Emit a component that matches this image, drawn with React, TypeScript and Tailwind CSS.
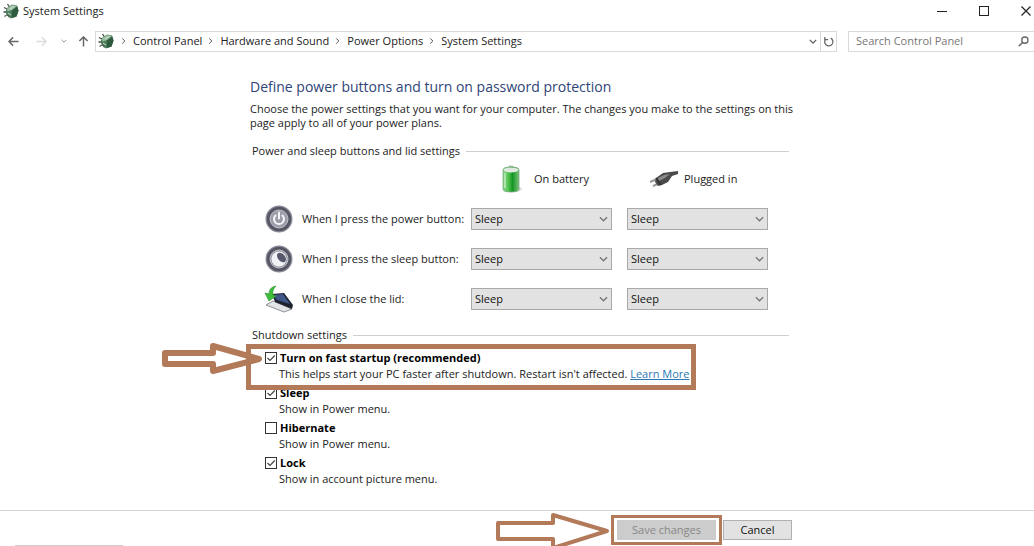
import React, { useState } from "react";

function GreenChip({ className }: { className: string }) {
  return (
    <svg viewBox="0 0 16 16" className={className} aria-hidden="true">
      <path d="M1 4.500 4 6M4.500 1 6.500 4M.5 9h3.500" stroke="#444c48" strokeWidth="1.300" fill="none" />
      <path d="M4 5 9 1.500l5 1 1.500 5-2 6-5.500 2-4-3-1.500-4Z" fill="#4b7c59" />
      <path d="M4 5.500 9 2l5 1-5 4-4.500 1.500Z" fill="#9dbfa4" />
      <path d="m9 7.500 5.500-4 1 4.500-2 5.500-4.500 1.500Z" fill="#2f5a3e" />
      <path d="m5 10 3 2M7 6l4-2.500" stroke="#cfe2d2" strokeWidth="1" fill="none" />
      <path d="m1.500 13.500 3-2 2 3" stroke="#56645b" strokeWidth="1.200" fill="none" />
    </svg>
  );
}

function Chevron({ className }: { className: string }) {
  return (
    <svg viewBox="0 0 10 6" className={className} fill="none" aria-hidden="true">
      <path d="m1 1 4 4 4-4" stroke="currentColor" strokeWidth="1.500" />
    </svg>
  );
}

function Arrow({ className, dir }: { className: string; dir: "left" | "right" | "up" }) {
  const d = {
    left: "M11.500 6H1M5.500 1.500 1 6l4.500 4.500",
    right: "M.5 6H11M6.500 1.500 11 6l-4.500 4.500",
    up: "M6 11.500V1M1.500 5.500 6 1l4.500 4.500",
  }[dir];
  return (
    <svg viewBox="0 0 12 12" className={className} fill="none" aria-hidden="true">
      <path d={d} stroke="currentColor" strokeWidth="1.600" />
    </svg>
  );
}

function Battery() {
  return (
    <svg viewBox="0 0 22 28" className="h-7 w-[22px]" aria-hidden="true">
      <defs>
        <linearGradient id="cell" x1="0" x2="1">
          <stop offset="0" stopColor="#8fd88c" />
          <stop offset=".35" stopColor="#4fc24d" />
          <stop offset=".6" stopColor="#149525" />
          <stop offset="1" stopColor="#7cc47c" />
        </linearGradient>
      </defs>
      <ellipse cx="14" cy="24" rx="7" ry="2.500" fill="#dcdcdc" />
      <rect x="7" y="0.500" width="6" height="4" rx="2" fill="#b8c4ba" />
      <path d="M2 5q0-3 8-3t8 3v19q0 3-8 3t-8-3Z" fill="url(#cell)" stroke="#6e9c72" strokeWidth=".7" />
      <ellipse cx="10" cy="5" rx="7.300" ry="2.400" fill="#dfe9e0" />
      <path d="M4 8v15" stroke="#d3f2d0" strokeWidth="1.200" />
    </svg>
  );
}

function Plug() {
  return (
    <svg viewBox="0 0 30 18" className="h-[18px] w-[30px]" aria-hidden="true">
      <path d="m1 12 7-3M4 16l7-3" stroke="#999" strokeWidth="2" />
      <path d="M7 8 14 3l7-1 8-1v3l-6 2-4 6-6 3-4 1-3-4Z" fill="#4a4a4a" />
      <path d="m9 8 6-3 6-1-5 4-6 3Z" fill="#8a8a8a" />
      <path d="m7 8 5 7" stroke="#333" strokeWidth="1.500" />
    </svg>
  );
}

function RoundButton({ kind }: { kind: "power" | "sleep" }) {
  return (
    <svg viewBox="0 0 28 28" className="size-7" aria-hidden="true">
      <circle cx="14" cy="14" r="13.500" fill="#8c8d98" />
      <circle cx="14" cy="14" r="12.200" fill="#555663" />
      <circle cx="14" cy="14" r="9" fill="#9b9da9" stroke="#bfc0c9" strokeWidth="1" />
      {kind === "power" ? (
        <>
          <path d="M10.500 10.500a5 5 0 1 0 7 0" fill="none" stroke="#f6f6fa" strokeWidth="2" strokeLinecap="round" />
          <path d="M14 7.500v6" stroke="#f6f6fa" strokeWidth="2" strokeLinecap="round" />
        </>
      ) : (
        <>
          <circle cx="14" cy="14" r="7.500" fill="#f1f2f6" />
          <ellipse cx="16.500" cy="12.500" rx="3.600" ry="5.500" transform="rotate(-40 16.500 12.500)" fill="#55586a" />
        </>
      )}
    </svg>
  );
}

function Lid() {
  return (
    <svg viewBox="0 0 30 28" className="h-7 w-[30px]" aria-hidden="true">
      <path d="m2 20 7-4 19 8-8 3Z" fill="#e3e4e6" stroke="#909298" strokeWidth="1" />
      <path d="M8 9 20 8l9 12-1 4-17-7Z" fill="#1d222d" />
      <path d="m9 10 10-1 7 10-13-4Z" fill="#3f5688" />
      <path d="M12 1C6 2 5 6 5 9L1 8l4 8 7-5-3-1c-.5-3 0-6 3-9Z" fill="#3fbd3c" stroke="#239026" strokeWidth=".6" />
    </svg>
  );
}

function Picker({ label }: { label: string }) {
  return (
    <div className="relative">
      <select
        aria-label={label}
        className="block h-[22px] w-full appearance-none border border-[#a9a9a9] bg-[#e2e2e2] pl-[3px] pr-5 text-[11px] leading-5 text-[#111]"
      >
        <option>Sleep</option>
        <option>Hibernate</option>
        <option>Do nothing</option>
      </select>
      <Chevron className="pointer-events-none absolute right-1 top-2 h-[6px] w-[9px] text-[#777]" />
    </div>
  );
}

function Section({ title }: { title: string }) {
  return (
    <div className="flex items-center gap-[6px] pl-[2px]">
      <h2 className="leading-4">{title}</h2>
      <div className="h-px flex-1 bg-[#cfcfcf]" />
    </div>
  );
}

function Option({ id, title, on, children }: { id: string; title: string; on: boolean; children: React.ReactNode }) {
  const [checked, setChecked] = useState(on);
  return (
    <div className="pl-[15px]">
      <div className="flex items-center gap-[3px]">
        <span className="relative size-3">
          <input
            id={id}
            type="checkbox"
            checked={checked}
            onChange={(e) => setChecked(e.target.checked)}
            className="peer block size-3 appearance-none border border-[#333] bg-white"
          />
          <svg
            viewBox="0 0 12 12"
            className="pointer-events-none absolute inset-0 hidden size-3 peer-checked:block"
            fill="none"
            aria-hidden="true"
          >
            <path d="m2.500 6 2.500 2.500L9.800 3.500" stroke="#444" strokeWidth="1.200" />
          </svg>
        </span>
        <label htmlFor={id} className="font-bold leading-4 text-black">
          {title}
        </label>
      </div>
      <p className="whitespace-nowrap pl-[14px] leading-4">{children}</p>
    </div>
  );
}

const crumbs = ["Control Panel", "Hardware and Sound", "Power Options", "System Settings"];

const rows = [
  { label: "When I press the power button:", icon: <RoundButton kind="power" /> },
  { label: "When I press the sleep button:", icon: <RoundButton kind="sleep" /> },
  { label: "When I close the lid:", icon: <Lid /> },
];

export default function App() {
  return (
    <div className="flex min-h-screen flex-col overflow-hidden bg-white font-['Open_Sans','Noto_Sans',sans-serif] text-[11px] text-[#222]">
      <header className="flex h-[22px] items-center gap-1 pl-[3px]">
        <GreenChip className="size-4" />
        <span>System Settings</span>
        <div className="ml-auto flex items-center gap-8 pr-[3px] text-[#222]">
          <button type="button" aria-label="Minimize" className="flex size-[10px] items-center">
            <span className="h-px w-full bg-[#222]" />
          </button>
          <button type="button" aria-label="Maximize" className="size-[10px] border border-[#222]" />
          <button type="button" aria-label="Close" className="size-[10px]">
            <svg viewBox="0 0 10 10" className="size-[10px]" fill="none">
              <path d="m.5.5 9 9m0-9-9 9" stroke="#222" strokeWidth="1.200" />
            </svg>
          </button>
        </div>
      </header>

      <div className="mt-[9px] flex h-5 items-center">
        <nav aria-label="History" className="flex w-[95px] items-center pl-2">
          <button type="button" aria-label="Back">
            <Arrow dir="left" className="size-[11px] text-[#666]" />
          </button>
          <button type="button" aria-label="Forward" className="ml-[17px]">
            <Arrow dir="right" className="size-[11px] text-[#ddd]" />
          </button>
          <button type="button" aria-label="Recent locations" className="ml-[14px]">
            <Chevron className="h-1 w-[6px] text-[#888]" />
          </button>
          <button type="button" aria-label="Up" className="ml-[11px]">
            <Arrow dir="up" className="size-[11px] text-[#666]" />
          </button>
        </nav>
        <div className="flex h-[21px] flex-1 items-center border border-[#d9d9d9] pl-[2px]">
          <GreenChip className="mr-[3px] size-4" />
          <ol className="flex items-center">
            {crumbs.map((c) => (
              <li key={c} className="flex items-center gap-[6px] pl-[3px] pr-[2px]">
                <Chevron className="h-[4px] w-[7px] -rotate-90 text-[#555]" />
                <a href="#" className="whitespace-nowrap">
                  {c}
                </a>
              </li>
            ))}
          </ol>
          <button type="button" aria-label="Previous locations" className="ml-auto mr-[3px]">
            <Chevron className="h-[5px] w-[8px] text-[#555]" />
          </button>
          <button
            type="button"
            aria-label="Refresh"
            className="flex h-full w-4 items-center justify-center border-l border-[#d9d9d9]"
          >
            <svg viewBox="0 0 12 12" className="size-[11px]" fill="none">
              <path d="M8.500 2.300A4.500 4.500 0 1 1 3 3.200M2 1v3h3.500" stroke="#666" strokeWidth="1.400" />
            </svg>
          </button>
        </div>
        <div className="ml-[11px] flex h-[21px] w-[186px] items-center border border-r-0 border-[#d9d9d9] pl-[7px] pr-[5px]">
          <input
            type="search"
            aria-label="Search Control Panel"
            placeholder="Search Control Panel"
            className="min-w-0 flex-1 bg-transparent outline-none placeholder:text-[#777]"
          />
          <svg viewBox="0 0 12 12" className="size-[11px]" fill="none" aria-hidden="true">
            <circle cx="7.500" cy="4.500" r="3.400" stroke="#666" strokeWidth="1.400" />
            <path d="M5 7 .8 11.200" stroke="#666" strokeWidth="1.600" />
          </svg>
        </div>
      </div>

      <main className="ml-[250px] mt-6 w-full max-w-[539px]">
        <h1 className="text-[14px] leading-6 text-[#2f4478]">
          Define power buttons and turn on password protection
        </h1>
        <p className="-mr-3 mt-[3px] leading-[14px]">
          Choose the power settings that you want for your computer. The changes you make to the settings on this page
          apply to all of your power plans.
        </p>

        <div className="mt-[13px]">
          <Section title="Power and sleep buttons and lid settings" />
        </div>

        <div className="mt-[6px] grid grid-cols-[192px_141px_141px] gap-x-[15px] pl-[14px]">
          <div className="col-start-2 flex h-7 items-center gap-[11px] pl-[30px]">
            <Battery />
            <span>On battery</span>
          </div>
          <div className="flex h-7 items-center gap-[5px] pl-[22px]">
            <Plug />
            <span>Plugged in</span>
          </div>
        </div>
        <div className="mt-[6px] grid grid-cols-[192px_141px_141px] gap-x-[15px] pl-[14px]">
          {rows.map((r) => (
            <React.Fragment key={r.label}>
              <div className="flex h-10 items-center gap-2 whitespace-nowrap">
                <span className="flex w-[30px] shrink-0 justify-center">{r.icon}</span>
                <span>{r.label}</span>
              </div>
              <div className="flex flex-col justify-center">
                <Picker label={`${r.label} On battery`} />
              </div>
              <div className="flex flex-col justify-center">
                <Picker label={`${r.label} Plugged in`} />
              </div>
            </React.Fragment>
          ))}
        </div>

        <div className="mt-2">
          <Section title="Shutdown settings" />
        </div>
        <div className="relative mt-[7px] flex flex-col gap-[3px]">
          <Option id="fast" title="Turn on fast startup (recommended)" on>
            This helps start your PC faster after shutdown. Restart isn't affected.{" "}
            <a href="#" className="text-[#2b78b5] underline">
              Learn More
            </a>
          </Option>
          <Option id="sleep" title="Sleep" on>
            Show in Power menu.
          </Option>
          <Option id="hibernate" title="Hibernate" on={false}>
            Show in Power menu.
          </Option>
          <Option id="lock" title="Lock" on>
            Show in account picture menu.
          </Option>
          <div className="pointer-events-none absolute -left-1 -top-[6px] h-[46px] w-[450px] border-[5px] border-[#b27a58]" />
          <svg
            viewBox="0 0 104 34"
            className="pointer-events-none absolute -left-[89px] -top-2 h-[34px] w-[104px]"
            fill="none"
            aria-hidden="true"
          >
            <path
              d="M4 11h48V4l46 13-46 12v-7H4Z"
              stroke="#b27a58"
              strokeWidth="6"
              strokeLinejoin="round"
            />
          </svg>
        </div>
      </main>

      <footer className="relative mt-auto flex h-9 items-start overflow-hidden border-t border-[#d4d4d4] pl-[611px] pt-1">
        <svg
          viewBox="0 0 116 36"
          className="pointer-events-none absolute left-[495px] top-0 h-9 w-[116px]"
          fill="none"
          aria-hidden="true"
        >
          <path d="M3 12h55V4l54 16-54 17v-9H3Z" stroke="#b27a58" strokeWidth="4" strokeLinejoin="round" />
        </svg>
        <div className="shrink-0 border-[3px] border-[#b27a58] px-[3px] py-[2px]">
          <button type="button" disabled className="block h-5 w-[99px] bg-[#cccccc] text-[#888]">
            Save changes
          </button>
        </div>
        <button
          type="button"
          className="ml-px mt-[5px] h-5 w-[69px] shrink-0 border border-[#b0b0b0] bg-[#e2e2e2] text-[#111]"
        >
          Cancel
        </button>
        <div className="absolute bottom-0 left-[15px] h-px w-[108px] bg-[#cccccc]" />
      </footer>
    </div>
  );
}
